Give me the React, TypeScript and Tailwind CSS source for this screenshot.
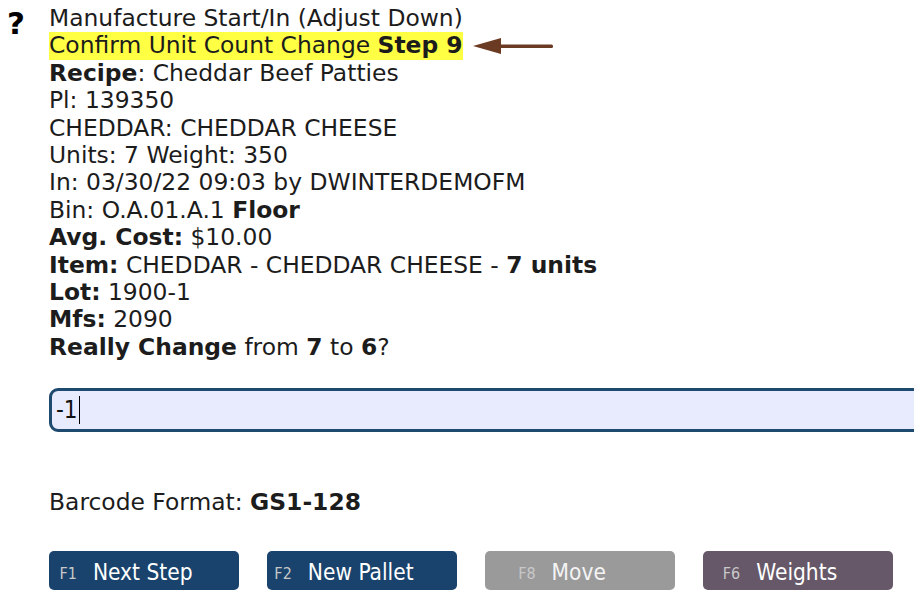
import React from 'react';

const Btn: React.FC<{ fkey: string; label: string; bg: string; fg: string }> = ({ fkey, label, bg, fg }) => (
    <div className={`w-[190px] h-[39px] rounded-[5px] flex items-center justify-center pr-[36px] pt-[5px] ${bg}`}>
        <span className="text-[16px] text-[#c8c8c8] mr-[16px] mt-[3px]">{fkey}</span>
        <span className={`text-[22.5px] ${fg}`}>{label}</span>
    </div>
);

export default function App() {
    return (
        <div className="w-[914px] h-[610px] overflow-hidden bg-white text-[#1c1c1c] flex" style={{ fontFamily: '"DejaVu Sans", Verdana, sans-serif' }}>
            <div className="w-[49px] shrink-0 pt-[8px] pl-[7px]">
                <span className="text-[31px] font-bold text-black leading-none">?</span>
            </div>
            <div className="flex flex-col pt-[5px]">
                <div className="text-[23.4px] leading-[27.4px]">
                    <div>Manufacture Start/In (Adjust Down)</div>
                    <div className="flex items-center">
                        <span className="bg-[#ffff44]">Confirm Unit Count Change <b>Step 9</b></span>
                        <svg width="82" height="20" viewBox="0 0 82 20" className="ml-[9px]">
                            <polygon points="1,10 29,2 29,18" fill="#6b3a22" />
                            <rect x="27" y="8.5" width="54" height="3.5" rx="1.5" fill="#6b3a22" />
                        </svg>
                    </div>
                    <div><b>Recipe</b>: Cheddar Beef Patties</div>
                    <div>Pl: 139350</div>
                    <div>CHEDDAR: CHEDDAR CHEESE</div>
                    <div>Units: 7 Weight: 350</div>
                    <div>In: 03/30/22 09:03 by DWINTERDEMOFM</div>
                    <div>Bin: O.A.01.A.1 <b>Floor</b></div>
                    <div><b>Avg. Cost:</b> $10.00</div>
                    <div><b>Item:</b> CHEDDAR - CHEDDAR CHEESE - <b>7 units</b></div>
                    <div><b>Lot:</b> 1900-1</div>
                    <div><b>Mfs:</b> 2090</div>
                    <div><b>Really Change</b> from <b>7</b> to <b>6</b>?</div>
                </div>
                <div className="mt-[27px] w-[890px] h-[44px] border-[3px] border-[#1e4a6f] rounded-[9px] bg-[#e8eafd] flex items-center pl-[4px]">
                    <span className="text-[24px] text-[#111]" style={{ fontFamily: '"DejaVu Sans Condensed", sans-serif' }}>-1</span>
                    <span className="w-px h-[28px] bg-black ml-[1px]" />
                </div>
                <div className="mt-[57px] text-[23.4px] leading-[27.4px]">
                    Barcode Format: <b>GS1-128</b>
                </div>
                <div className="mt-[34px] flex gap-[28px]" style={{ fontFamily: '"DejaVu Sans Condensed", sans-serif' }}>
                    <Btn fkey="F1" label="Next Step" bg="bg-[#19436c]" fg="text-white" />
                    <Btn fkey="F2" label="New Pallet" bg="bg-[#19436c]" fg="text-white" />
                    <Btn fkey="F8" label="Move" bg="bg-[#9a9a9b]" fg="text-[#f4f4f4]" />
                    <Btn fkey="F6" label="Weights" bg="bg-[#665868]" fg="text-white" />
                </div>
            </div>
        </div>
    );
}
